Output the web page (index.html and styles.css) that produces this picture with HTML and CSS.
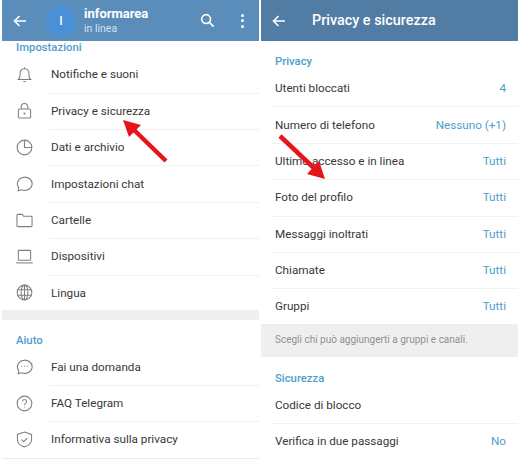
FILE: index.html
```html
<!DOCTYPE html>
<html lang="it">
<head>
    <meta charset="UTF-8">
    <title>Telegram impostazioni</title>
    <link rel="stylesheet" href="styles.css">
</head>
<body>
<div class="schermi">
    <!-- Impostazioni -->
    <div class="pannello">
        <div class="barra barra-chiara">
            <svg class="ico-barra" viewBox="0 0 16 16"><path d="M14 8H2.500M7.500 3 2.500 8l5 5"/></svg>
            <div class="avatar">I</div>
            <div class="profilo">
                <div class="nome">informarea</div>
                <div class="stato">in linea</div>
            </div>
            <svg class="ico-cerca" viewBox="0 0 16 16"><circle cx="6.500" cy="6.500" r="4.700"/><path d="M10 10l4.600 4.600"/></svg>
            <div class="punti"><i></i><i></i><i></i></div>
        </div>
        <div class="sezione-imp">
            <div class="titolo-sezione titolo-primo">Impostazioni</div>
            <div class="voce">
                <svg class="ico" viewBox="0 0 18 18"><path d="M2.500 14.200h13c-1.300-1.300-1.800-2.400-1.800-4.700V7.500a4.700 4.700 0 0 0-9.400 0v2c0 2.300-.5 3.400-1.800 4.700zM9 1.400v1.400M7.800 16.300h2.400"/></svg>
                <div class="testo-voce">Notifiche e suoni</div>
            </div>
            <div class="voce">
                <svg class="ico" viewBox="0 0 18 18"><rect x="2.500" y="7.500" width="13" height="9.500" rx="1.500"/><path d="M5.500 7.500V5a3.500 3.500 0 0 1 7 0v2.500"/><circle cx="9" cy="12.200" r=".6"/></svg>
                <div class="testo-voce">Privacy e sicurezza</div>
            </div>
            <div class="voce">
                <svg class="ico" viewBox="0 0 18 18"><circle cx="9" cy="9" r="7.800"/><path d="M9 1.200V9h7.800"/></svg>
                <div class="testo-voce">Dati e archivio</div>
            </div>
            <div class="voce">
                <svg class="ico" viewBox="0 0 18 18"><path d="M2.900 13.300a7.800 7 0 1 1 3 2.300l-3.600 1z"/></svg>
                <div class="testo-voce">Impostazioni chat</div>
            </div>
            <div class="voce">
                <svg class="ico" viewBox="0 0 18 18"><path d="M1 3.500a1 1 0 0 1 1-1h4.500l1.500 2h8a1 1 0 0 1 1 1v9a1 1 0 0 1-1 1H2a1 1 0 0 1-1-1z"/></svg>
                <div class="testo-voce">Cartelle</div>
            </div>
            <div class="voce">
                <svg class="ico" viewBox="0 0 18 18"><rect x="2.500" y="2.500" width="13" height="10.500" rx=".8"/><path d="M.3 15.800h17.400"/></svg>
                <div class="testo-voce">Dispositivi</div>
            </div>
            <div class="voce">
                <svg class="ico" viewBox="0 0 18 18"><circle cx="9" cy="9" r="7.800"/><ellipse cx="9" cy="9" rx="3.600" ry="7.800"/><path d="M9 1.200v15.600M2 6h14M2 12h14"/></svg>
                <div class="testo-voce">Lingua</div>
            </div>
        </div>
        <div class="fascia"></div>
        <div class="sezione-aiuto">
            <div class="titolo-sezione">Aiuto</div>
            <div class="voce">
                <svg class="ico" viewBox="0 0 18 18"><path d="M2.900 13.300a7.800 7 0 1 1 3 2.300l-3.600 1z"/><path d="M5.600 8.800h1M8.500 8.800h1M11.400 8.800h1"/></svg>
                <div class="testo-voce">Fai una domanda</div>
            </div>
            <div class="voce">
                <svg class="ico" viewBox="0 0 18 18"><circle cx="9" cy="9" r="7.800"/><path d="M6.800 7a2.200 2.200 0 1 1 3.400 1.900c-.8.500-1.200 1-1.200 1.900M9 12.800v.5"/></svg>
                <div class="testo-voce">FAQ Telegram</div>
            </div>
            <div class="voce">
                <svg class="ico" viewBox="0 0 18 18"><path d="M9 1l7.500 2.600v5.200c0 3.900-3 6.800-7.500 8.200-4.500-1.400-7.500-4.300-7.500-8.200V3.600z"/><path d="M5.800 9l2.300 2.300 4-4"/></svg>
                <div class="testo-voce">Informativa sulla privacy</div>
            </div>
        </div>
    </div>

    <!-- Privacy e sicurezza -->
    <div class="pannello">
        <div class="barra barra-scura">
            <svg class="ico-barra" viewBox="0 0 16 16"><path d="M14 8H2.500M7.500 3 2.500 8l5 5"/></svg>
            <div class="titolo-barra">Privacy e sicurezza</div>
        </div>
        <div class="sezione-privacy">
            <div class="titolo-sezione">Privacy</div>
            <div class="riga"><span>Utenti bloccati</span><span class="valore">4</span></div>
            <div class="riga"><span>Numero di telefono</span><span class="valore">Nessuno (+1)</span></div>
            <div class="riga"><span>Ultimo accesso e in linea</span><span class="valore">Tutti</span></div>
            <div class="riga"><span>Foto del profilo</span><span class="valore">Tutti</span></div>
            <div class="riga"><span>Messaggi inoltrati</span><span class="valore">Tutti</span></div>
            <div class="riga"><span>Chiamate</span><span class="valore">Tutti</span></div>
            <div class="riga riga-gruppi"><span>Gruppi</span><span class="valore">Tutti</span></div>
        </div>
        <div class="nota">Scegli chi può aggiungerti a gruppi e canali.</div>
        <div class="sezione-sicurezza">
            <div class="titolo-sezione">Sicurezza</div>
            <div class="riga"><span>Codice di blocco</span></div>
            <div class="riga"><span>Verifica in due passaggi</span><span class="valore">No</span></div>
        </div>
    </div>
</div>

<!-- frecce rosse sopra gli screenshot -->
<svg class="frecce" viewBox="0 0 520 459">
    <path d="M166 161 132 128"/>
    <polygon points="123,120 141,125 129,137"/>
    <path d="M280 136 316 170"/>
    <polygon points="325,179 307,174 319,161"/>
</svg>
</body>
</html>
```

FILE: styles.css
```css
body {
    margin: 0;
    background: #ffffff;
    font-family: Roboto, "Liberation Sans", sans-serif;
    color: #383838;
}

.schermi {
    display: flex;
    gap: 2px;
    padding: 0 2px;
    height: 459px;
    overflow: hidden;
}

.pannello {
    width: 257px;
    display: flex;
    flex-direction: column;
}

.barra {
    height: 41px;
    flex-shrink: 0;
    display: flex;
    align-items: center;
    color: #fff;
}
.barra-chiara {
    background: #5a8dba;
}
.barra-scura {
    background: #517ca3;
}

.ico-barra {
    width: 16px;
    height: 16px;
    margin-left: 10px;
    fill: none;
    stroke: #fff;
    stroke-width: 1.6;
}

.avatar {
    width: 30px;
    height: 30px;
    margin-left: 18px;
    border-radius: 50%;
    background: #4a90d6;
    color: #fff;
    font-size: 12px;
    font-weight: 500;
    display: flex;
    align-items: center;
    justify-content: center;
}

.profilo {
    margin-left: 8px;
    flex: 1;
}
.nome {
    font-size: 13px;
    font-weight: 700;
    line-height: 16px;
}
.stato {
    font-size: 10.5px;
    line-height: 14px;
    color: #cfe2f2;
}

.ico-cerca {
    width: 15px;
    height: 15px;
    fill: none;
    stroke: #fff;
    stroke-width: 1.8;
}

.punti {
    margin: 0 15px 0 26px;
    display: flex;
    flex-direction: column;
    gap: 2.5px;
}
.punti i {
    width: 3px;
    height: 3px;
    border-radius: 50%;
    background: #fff;
}

.titolo-barra {
    margin-left: 25px;
    font-size: 14.4px;
    font-weight: 500;
}

.titolo-sezione {
    font-size: 11.3px;
    font-weight: 500;
    color: #4f9dcb;
    padding-left: 14px;
    height: 17px;
    line-height: 17px;
}
.titolo-primo {
    height: 15.3px;
    line-height: 13px;
}

.sezione-imp {
    height: 269px;
    flex-shrink: 0;
}
.sezione-aiuto {
    padding-top: 11.5px;
    flex: 1;
    border-bottom: 1px solid #ececec;
}

.voce {
    height: 36.4px;
    display: flex;
    align-items: center;
    position: relative;
}
.voce + .voce::before,
.riga + .riga::before {
    content: "";
    position: absolute;
    top: 0;
    left: 47px;
    right: 0;
    border-top: 1px solid #f1f1f1;
}
.riga + .riga::before {
    left: 11px;
}
.ico {
    width: 17px;
    height: 17px;
    margin-left: 14px;
    fill: none;
    stroke: #7e7e7e;
    stroke-width: 1.1;
    flex-shrink: 0;
}
.testo-voce {
    margin-left: 18px;
    font-size: 11.7px;
}

.fascia {
    height: 10px;
    flex-shrink: 0;
    background: #efefef;
}

.sezione-privacy {
    padding-top: 12px;
    flex-shrink: 0;
}
.sezione-sicurezza {
    padding-top: 12.5px;
}

.riga {
    height: 36.4px;
    display: flex;
    align-items: center;
    justify-content: space-between;
    padding: 0 12px 0 14px;
    font-size: 11.7px;
    position: relative;
}
.riga-gruppi {
    height: 36px;
}
.valore {
    color: #4f9dcb;
}

.nota {
    height: 33px;
    flex-shrink: 0;
    background: #efefef;
    color: #8f8f8f;
    font-size: 10px;
    line-height: 32px;
    padding-left: 14px;
}

.frecce {
    position: absolute;
    top: 0;
    left: 0;
    width: 520px;
    height: 459px;
}
.frecce path {
    stroke: #e8141c;
    stroke-width: 4.5;
    fill: none;
}
.frecce polygon {
    fill: #e8141c;
}
```
